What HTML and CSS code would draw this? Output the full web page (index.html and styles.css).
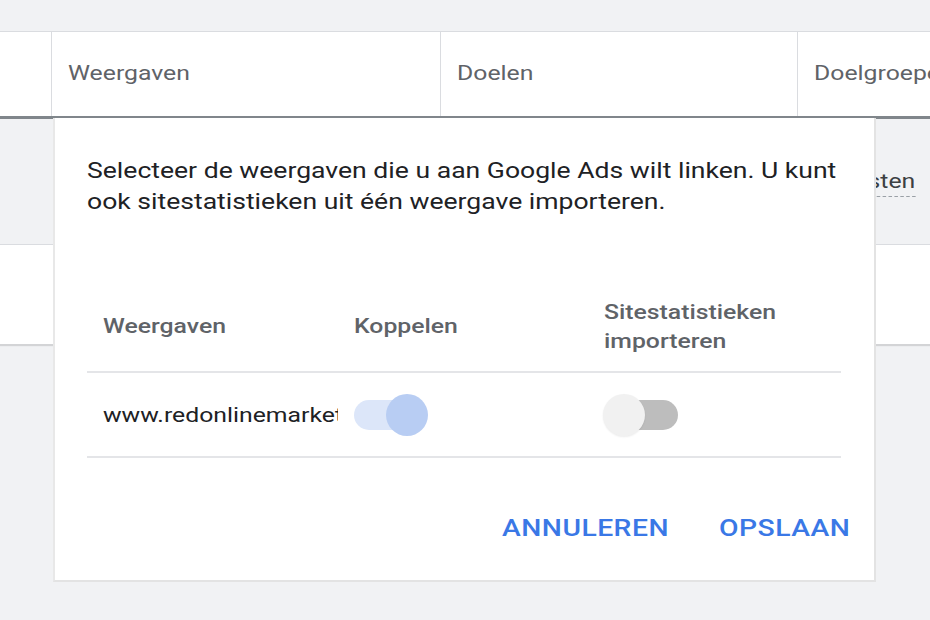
FILE: index.html
```html
<!DOCTYPE html>
<html lang="nl">
<head>
<meta charset="utf-8">
<title>Weergaven koppelen</title>
<link rel="stylesheet" href="styles.css">
</head>
<body>
<div class="page">
  <div class="card">
    <div class="thead">
      <div class="th th-first"></div>
      <div class="th"><span class="sx">Weergaven</span></div>
      <div class="th"><span class="sx">Doelen</span></div>
      <div class="th"><span class="sx">Doelgroepen</span></div>
    </div>
    <div class="row row-grey">
      <div class="td td-first"></div>
      <div class="td"></div>
      <div class="td"></div>
      <div class="td td-link"><span class="sx dashed">Doellijsten</span></div>
    </div>
    <div class="row row-white">
      <div class="td td-first"></div>
      <div class="td"></div>
      <div class="td"></div>
      <div class="td"></div>
    </div>
  </div>

  <div class="dialog">
    <p class="intro">Selecteer de weergaven die u aan Google Ads wilt linken. U kunt ook sitestatistieken uit één weergave importeren.</p>
    <div class="dtable">
      <div class="dhead">
        <div class="dh"><span class="sx">Weergaven</span></div>
        <div class="dh"><span class="sx">Koppelen</span></div>
        <div class="dh"><span class="sx wrap">Sitestatistieken importeren</span></div>
      </div>
      <div class="drow">
        <div class="dc name"><span class="sx">www.redonlinemarketing.nl</span></div>
        <div class="dc"><span class="switch on"><span class="track"></span><span class="knob"></span></span></div>
        <div class="dc"><span class="switch off"><span class="track"></span><span class="knob"></span></span></div>
      </div>
    </div>
    <div class="actions">
      <button class="btn">ANNULEREN</button>
      <button class="btn">OPSLAAN</button>
    </div>
  </div>
</div>
</body>
</html>
```
FILE: styles.css
```css
* { box-sizing: border-box; }
html, body {
  margin: 0;
  padding: 0;
  width: 930px;
  height: 620px;
  overflow: hidden;
  background: #f1f2f4;
  font-family: Roboto, "Liberation Sans", sans-serif;
}
.page {
  position: relative;
  padding-top: 31px;
  height: 620px;
}
.sx {
  display: inline-block;
  transform: scaleX(1.18);
  transform-origin: left center;
  white-space: nowrap;
}
.card {
  background: #fff;
  border-top: 1px solid #dadce0;
  box-shadow: 0 2px 1px rgba(0,0,0,0.12);
}
.thead, .row {
  display: grid;
  grid-template-columns: 51px 389px 357px 1fr;
}
.thead {
  height: 87px;
  border-bottom: 3px solid #80868b;
}
.th {
  border-left: 1px solid #dadce0;
  display: flex;
  align-items: center;
  padding-left: 16px;
  padding-bottom: 2px;
  font-size: 21px;
  color: #5f6368;
  white-space: nowrap;
  overflow: hidden;
}
.th-first { border-left: none; }
.row-grey {
  height: 126px;
  background: #f1f2f4;
  border-bottom: 1px solid #dadce0;
}
.row-white {
  height: 99px;
  background: #fff;
}
.td {
  display: flex;
  align-items: center;
  padding-left: 16px;
  font-size: 21px;
  color: #3c4043;
  white-space: nowrap;
  overflow: hidden;
}
.td-link {
  padding-left: 3px;
  padding-top: 2px;
}
.dashed {
  border-bottom: 1px dashed #9aa0a6;
  padding-bottom: 3px;
}
.dialog {
  position: absolute;
  left: 53px;
  top: 118px;
  width: 823px;
  height: 464px;
  background: #fff;
  border-right: 2px solid #e3e3e3;
  border-bottom: 2px solid #e3e3e3;
  border-left: 2px solid #e8e8e8;
  padding: 37px 33px 0 32px;
}
.intro {
  margin: 0;
  width: 645px;
  font-size: 22.5px;
  line-height: 31px;
  color: #202124;
  transform: scaleX(1.18);
  transform-origin: left top;
}
.dtable {
  margin-top: 65px;
  width: 754px;
}
.dhead, .drow {
  display: grid;
  grid-template-columns: 251px 250px 1fr;
  border-bottom: 2px solid #e4e5e8;
}
.dhead {
  height: 91px;
  align-items: center;
}
.dh {
  padding-left: 16px;
  font-size: 21px;
  font-weight: 500;
  line-height: 29px;
  color: #5f6368;
}
.wrap {
  white-space: normal;
  width: 160px;
}
.drow {
  height: 85px;
  align-items: center;
}
.dc {
  padding-left: 16px;
  font-size: 21px;
  color: #202124;
  display: flex;
  align-items: center;
}
.name {
  white-space: nowrap;
  overflow: hidden;
}
.switch {
  position: relative;
  display: inline-block;
  width: 74px;
  height: 42px;
}
.track {
  position: absolute;
  left: 0;
  top: 6px;
  width: 72px;
  height: 30px;
  border-radius: 15px;
}
.knob {
  position: absolute;
  top: 0;
  width: 42px;
  height: 42px;
  border-radius: 50%;
}
.on .track { background: #dce6f9; }
.on .knob { left: 32px; background: #b8cdf3; }
.off .track { left: 2px; background: #bdbdbd; }
.off .knob { left: -1px; background: #f1f1f1; box-shadow: 0 1px 2px rgba(0,0,0,0.08); }
.actions {
  display: flex;
  gap: 76px;
  margin-top: 48px;
  padding-left: 415px;
}
.btn {
  border: none;
  background: none;
  padding: 8px 0;
  font-family: Roboto, "Liberation Sans", sans-serif;
  font-size: 24px;
  font-weight: 500;
  letter-spacing: 0.4px;
  color: #3a78e6;
  cursor: pointer;
  transform: scaleX(1.18);
  transform-origin: left center;
}
```
